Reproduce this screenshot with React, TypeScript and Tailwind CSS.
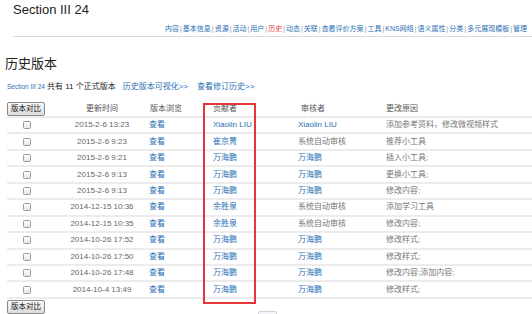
import React from "react";

const navItems = [
  "内容",
  "基本信息",
  "资源",
  "活动",
  "用户",
  "历史",
  "动态",
  "关联",
  "查看评价方案",
  "工具",
  "KNS网络",
  "语义属性",
  "分类",
  "多元展现模板",
  "管理",
];

type Row = {
  time: string;
  author: string;
  reviewer: string;
  reviewerLink: boolean;
  reason: string;
};

const rows: Row[] = [
  { time: "2015-2-6 13:23", author: "Xiaolin LIU", reviewer: "Xiaolin LIU", reviewerLink: true, reason: "添加参考资料，修改微视频样式" },
  { time: "2015-2-6 9:23", author: "崔京菁", reviewer: "系统自动审核", reviewerLink: false, reason: "推荐小工具" },
  { time: "2015-2-6 9:21", author: "万海鹏", reviewer: "万海鹏", reviewerLink: true, reason: "插入小工具;" },
  { time: "2015-2-6 9:13", author: "万海鹏", reviewer: "万海鹏", reviewerLink: true, reason: "更换小工具;" },
  { time: "2015-2-6 9:13", author: "万海鹏", reviewer: "万海鹏", reviewerLink: true, reason: "修改内容;" },
  { time: "2014-12-15 10:36", author: "余胜泉", reviewer: "系统自动审核", reviewerLink: false, reason: "添加学习工具" },
  { time: "2014-12-15 10:35", author: "余胜泉", reviewer: "系统自动审核", reviewerLink: false, reason: "修改内容;" },
  { time: "2014-10-26 17:52", author: "万海鹏", reviewer: "万海鹏", reviewerLink: true, reason: "修改样式;" },
  { time: "2014-10-26 17:50", author: "万海鹏", reviewer: "万海鹏", reviewerLink: true, reason: "修改样式;" },
  { time: "2014-10-26 17:48", author: "万海鹏", reviewer: "万海鹏", reviewerLink: true, reason: "修改内容;添加内容;" },
  { time: "2014-10-4 13:49", author: "万海鹏", reviewer: "万海鹏", reviewerLink: true, reason: "修改样式;" },
];

const cols = "grid grid-cols-[48px_94px_64px_85px_88px_1fr] items-center";

function CompareButton() {
  return (
    <button
      type="button"
      className="flex h-[14px] w-[38px] items-center justify-center rounded-[2px] border border-[#8a8a8a] bg-gradient-to-b from-[#fafafa] to-[#dcdcdc] text-[7.5px] leading-none text-[#111]"
    >
      版本对比
    </button>
  );
}

function Checkbox() {
  return (
    <span className="block h-[8px] w-[8px] rounded-[1.5px] border border-[#9a9a9a] bg-gradient-to-b from-white to-[#e6e6e6]" />
  );
}

export default function App() {
  return (
    <div
      className="relative h-[314px] w-[532px] overflow-hidden bg-white text-[#555]"
      style={{ fontFamily: '"Liberation Sans", "Noto Sans CJK SC", sans-serif' }}
    >
      <div className="flex h-[20px] items-center pl-[13px] text-[13px] text-[#222]">
        Section III 24
      </div>

      <div className="ml-[13px] flex h-[17px] items-center justify-end border-b border-[#cfe0da] pr-[5px] text-[7px] leading-none">
        {navItems.map((item, i) => (
          <span key={item} className="flex items-center">
            {i > 0 && <span className="mx-[1px] text-[#999]">|</span>}
            <span className={item === "历史" ? "text-[#e8413a]" : "text-[#2a6fb5]"}>{item}</span>
          </span>
        ))}
      </div>

      <div
        className="flex h-[42px] items-center pl-[5px] pt-[10px] text-[13px] text-[#222]"
        style={{ fontFamily: '"Noto Sans CJK SC", serif' }}
      >
        历史版本
      </div>

      <div className="flex h-[16px] items-center pl-[7px] text-[8px] leading-none text-[#222]">
        <span className="text-[6.5px] text-[#2a6fb5]">Section III 24</span>
        <span className="ml-[2px]">共有 11 个正式版本</span>
        <span className="ml-[7px] text-[#2a6fb5]">历史版本可视化&gt;&gt;</span>
        <span className="ml-[9px] text-[#2a6fb5]">查看修订历史&gt;&gt;</span>
      </div>

      <div className="mt-[6px] pl-[7px]">
        <div className={`${cols} h-[17px] border-b-2 border-[#ececec] text-[8px] leading-none text-[#555]`}>
          <div>
            <CompareButton />
          </div>
          <div className="text-center">更新时间</div>
          <div className="pl-[1px]">版本浏览</div>
          <div>贡献者</div>
          <div className="pl-[3px]">审核者</div>
          <div>更改原因</div>
        </div>

        {rows.map((r, i) => (
          <div
            key={i}
            className={`${cols} h-[16.45px] border-b-2 border-[#ececec] text-[8px] leading-none`}
          >
            <div className="pl-[16px]">
              <Checkbox />
            </div>
            <div className="text-center text-[#666]">{r.time}</div>
            <div className="text-[#2a6fb5]">查看</div>
            <div className="text-[#2a6fb5]">{r.author}</div>
            <div className={r.reviewerLink ? "text-[#2a6fb5]" : "text-[#777]"}>{r.reviewer}</div>
            <div className="text-[#777]">{r.reason}</div>
          </div>
        ))}

        <div className="mt-[1px]">
          <CompareButton />
        </div>
      </div>

      <div className="absolute left-[258px] top-[311px] h-[8px] w-[19px] rounded-[2px] border border-[#c9d3de] bg-[#f3f5f8]" />

      <div className="absolute left-[203px] top-[103px] h-[201px] w-[53px] border-2 border-[#e8353a]" />
    </div>
  );
}
